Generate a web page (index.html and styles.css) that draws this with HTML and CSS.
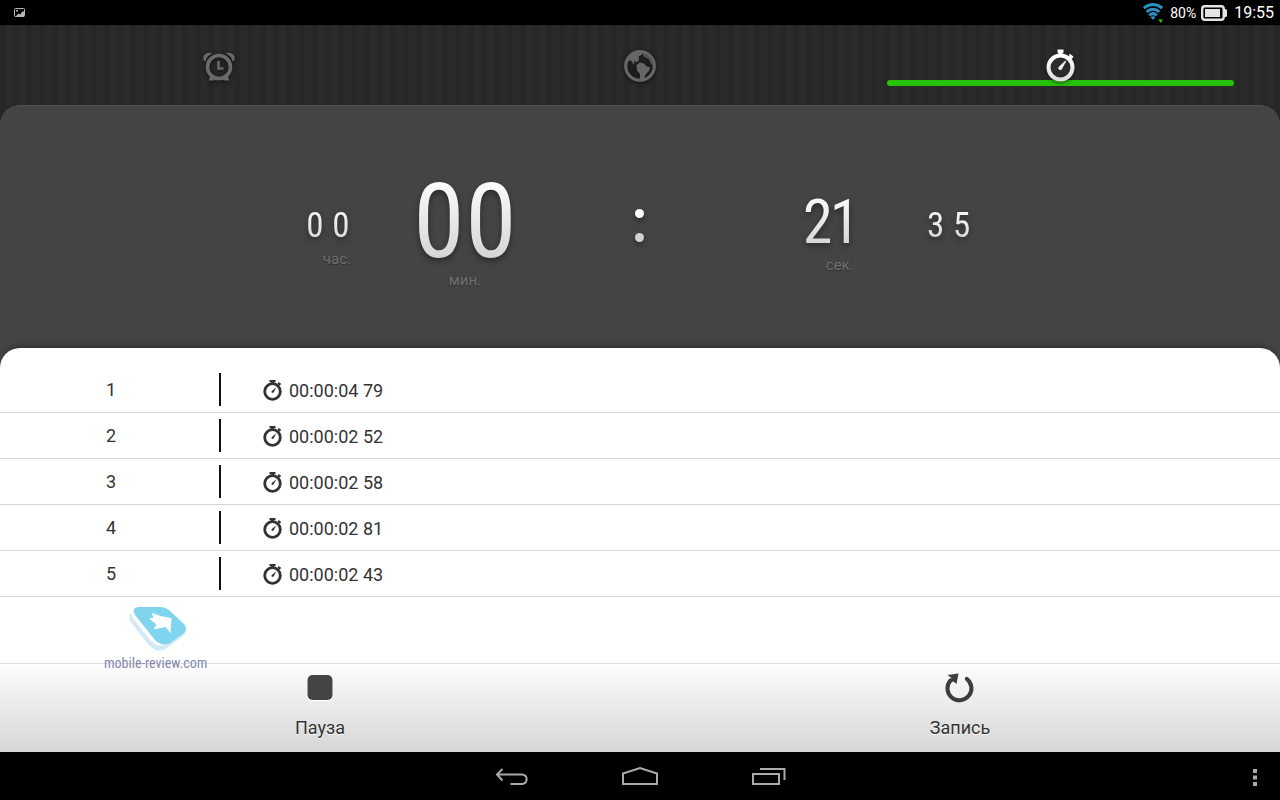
FILE: index.html
```
<!DOCTYPE html>
<html lang="ru">
<head>
  <meta charset="UTF-8">
  <meta name="viewport" content="width=device-width, initial-scale=1">
  <title>Секундомер</title>
  <link rel="stylesheet" href="styles.css">
</head>

<body>
  <!-- Shared icons -->
  <svg class="sprite" aria-hidden="true">
    <defs>
      <linearGradient id="silver" x1="0" y1="0" x2="0" y2="1">
        <stop offset="0" stop-color="#fff"/>
        <stop offset="1" stop-color="#ddd"/>
      </linearGradient>
    </defs>
    <symbol id="lap-watch" viewBox="0 0 20 22">
      <circle cx="9.5" cy="12.5" r="7.8" fill="none" stroke="#333" stroke-width="2.8"/>
      <path d="M6.500 1h6v2.200h-1.600V5H8.100V3.200H6.500z M15.600 3l2.500 1.800-1.200 2-2.500-1.700z" fill="#333"/>
      <path d="M13.300 8.200L10.600 13.500 8.800 14 8.500 12.200z" fill="#333"/>
    </symbol>
  </svg>

  <!-- Status bar -->
  <header class="status-bar">
    <svg width="11" height="9" viewBox="0 0 11 9" aria-hidden="true">
      <rect x="0.500" y="0.500" width="10" height="8" rx="1" fill="none" stroke="#b8b8b8"/>
      <rect x="2" y="2" width="2" height="1.500" fill="#b8b8b8"/>
      <path d="M1 9L4.500 5.500 6 6.500 9 3 10 4V9z" fill="#b8b8b8"/>
    </svg>
    <div class="status-right">
      <svg width="20" height="20" viewBox="0 0 20 20" aria-hidden="true">
        <g fill="none" stroke="#2b93c2" stroke-width="3">
          <path d="M0.800 5Q10-2 19.200 5"/>
          <path d="M3.600 8.800Q10 3.600 16.400 8.800"/>
          <path d="M6.200 12.300Q10 9 13.800 12.300"/>
        </g>
        <path d="M7.400 14Q10 12.400 12.600 14L10 17z" fill="#2b93c2"/>
        <path d="M15.500 16.500h4.500L17.700 20z" fill="#3fc400"/>
      </svg>
      <span class="percent">80%</span>
      <svg width="26" height="16" viewBox="0 0 26 16" aria-hidden="true">
        <rect x="1.200" y="1.200" width="21.500" height="13.600" rx="2.500" fill="none" stroke="#e4e4e4" stroke-width="2.400"/>
        <rect x="4" y="4" width="15" height="8" fill="#e4e4e4"/>
        <path d="M23 4h1.500q1.500 0 1.500 1.500v5q0 1.500-1.500 1.500H23z" fill="#e4e4e4"/>
      </svg>
      <time class="clock">19:55</time>
    </div>
  </header>

  <!-- Tabs -->
  <nav class="tabs">
    <button type="button" aria-label="Будильник">
      <svg width="34" height="34" viewBox="0 0 34 34" aria-hidden="true">
        <circle cx="17" cy="18" r="11.500" fill="none" stroke="#6a6a6a" stroke-width="3.600"/>
        <path d="M1.500 11Q0.500 8 3 5.500 6 2.500 10.500 4.500 4.500 6.500 3.500 12.500zM32.500 11Q33.500 8 31 5.500 28 2.500 23.500 4.500 29.500 6.500 30.500 12.500z" fill="#6a6a6a"/>
        <path d="M9 25.500L6.500 31.500H12L13.500 29zM25 25.500L27.500 31.500H22L20.500 29z" fill="#6a6a6a"/>
        <path d="M16.500 12v7.500h5" fill="none" stroke="#6a6a6a" stroke-width="2.600"/>
      </svg>
    </button>
    <button type="button" aria-label="Мировое время">
      <svg width="34" height="34" viewBox="0 0 34 34" aria-hidden="true">
        <circle cx="17" cy="17" r="14.300" fill="#1c1c1c" stroke="#666" stroke-width="3.200"/>
        <path d="M4 12L8 5 14 2.500 19 3 19 5.500 15.500 7.500 16 11 13.500 13.500 11.500 11.500 11 16 8 11.500z" fill="#666"/>
        <path d="M13.500 16L17 13.500 21 14.500 23.500 17.500 27 18 26 22 22.500 25.500 20.500 31.500 17 32 17 25 14 21.500z" fill="#666"/>
        <path d="M20 4L29 10 31 17 28 15 26 10.500 20 7z" fill="#555"/>
      </svg>
    </button>
    <button type="button" class="active" aria-label="Секундомер" aria-current="page">
      <svg width="34" height="36" viewBox="0 0 34 36" aria-hidden="true">
        <circle cx="16.500" cy="20.500" r="12" fill="#2b2b2b" stroke="url(#silver)" stroke-width="4"/>
        <path d="M13.500 2.500h6v3l-1.500 1.500v2h-3V7l-1.500-1.500z M25.500 6.500l4 3-1.500 2.500-1.500-.5-1.500 2-2-1.500 2-2z" fill="#fff"/>
        <path d="M21.500 13.500l.8.800L18.200 21.500a2 2 0 1 1-2.800-2.300z" fill="#eee"/>
      </svg>
    </button>
  </nav>

  <main class="panel">
    <!-- Running time -->
    <section class="timer">
      <div class="unit small">
        <div class="digits"><span>0</span><span>0</span></div>
        <p class="unit-name">час.</p>
      </div>
      <div class="unit large">
        <div class="digits"><span>0</span><span>0</span></div>
        <p class="unit-name">мин.</p>
      </div>
      <div class="colon"><i></i><i></i></div>
      <div class="unit medium">
        <div class="digits"><span>2</span><span>1</span></div>
        <p class="unit-name">сек.</p>
      </div>
      <div class="unit small">
        <div class="digits"><span>3</span><span>5</span></div>
      </div>
    </section>

    <!-- Laps -->
    <section class="laps">
      <table>
        <tr>
          <th scope="row"><span>1</span></th>
          <td><svg width="20" height="22" aria-hidden="true"><use href="#lap-watch"/></svg>00:00:04 79</td>
        </tr>
        <tr>
          <th scope="row"><span>2</span></th>
          <td><svg width="20" height="22" aria-hidden="true"><use href="#lap-watch"/></svg>00:00:02 52</td>
        </tr>
        <tr>
          <th scope="row"><span>3</span></th>
          <td><svg width="20" height="22" aria-hidden="true"><use href="#lap-watch"/></svg>00:00:02 58</td>
        </tr>
        <tr>
          <th scope="row"><span>4</span></th>
          <td><svg width="20" height="22" aria-hidden="true"><use href="#lap-watch"/></svg>00:00:02 81</td>
        </tr>
        <tr>
          <th scope="row"><span>5</span></th>
          <td><svg width="20" height="22" aria-hidden="true"><use href="#lap-watch"/></svg>00:00:02 43</td>
        </tr>
      </table>

      <div class="watermark">
        <svg width="60" height="50" viewBox="0 0 60 50" aria-hidden="true">
          <path d="M3 9Q0 13 2 17L20 40Q28 49 36 46L54 33Q59 29 58 24L30 38Q24 38 20 33z" fill="#d3e9f7"/>
          <path d="M6 5Q3 10 5 14L22 36Q28 43 36 41L54 29Q59 25 55 22L30 34z" fill="#fff"/>
          <path d="M10 3H33Q37 3 41 6L56 20Q60 25 56 29L42 39Q34 43 27 36L7 11Q3 4 10 3z" fill="#80d5ee"/>
          <path d="M23.500 8.700L32.500 12 43.500 14.300 42.500 29 37.500 23 25.500 25.500 28.500 20.500 21 14.500 25.500 13.700z" fill="#fff"/>
        </svg>
        <span>mobile-review.com</span>
      </div>
    </section>
  </main>

  <!-- Actions -->
  <div class="actions">
    <button type="button">
      <svg width="30" height="32" viewBox="0 0 30 32" aria-hidden="true">
        <rect x="2" y="3" width="26" height="26" rx="5" fill="#fff"/>
        <rect x="2.500" y="3" width="25" height="25" rx="5" fill="#444"/>
      </svg>
      Пауза
    </button>
    <button type="button">
      <svg width="30" height="32" viewBox="0 0 30 32" aria-hidden="true">
        <path d="M21.800 6.800A12 12 0 1 1 5.500 8.300" fill="none" stroke="#3c3c3c" stroke-width="4" stroke-linecap="round"/>
        <path d="M2.500 3L13.500 1.500 11.500 12 8.500 9.500 5 10.500 6.500 6z" fill="#3c3c3c"/>
      </svg>
      Запись
    </button>
  </div>

  <!-- System navigation -->
  <footer class="system-bar">
    <div class="system-keys">
      <button type="button" aria-label="Назад">
        <svg width="36" height="24" viewBox="0 0 36 24" aria-hidden="true">
          <path d="M8.500 3L3 8.500l5.500 6M3 8.500h25.500a4.800 4.800 0 0 1 0 9.500H16.500" fill="none" stroke="#aaa" stroke-width="2"/>
        </svg>
      </button>
      <button type="button" aria-label="Домой">
        <svg width="36" height="24" viewBox="0 0 36 24" aria-hidden="true">
          <path d="M1 18V7.500L18 2 35 7.500V18z" fill="none" stroke="#aaa" stroke-width="2"/>
        </svg>
      </button>
      <button type="button" aria-label="Недавние">
        <svg width="36" height="24" viewBox="0 0 36 24" aria-hidden="true">
          <path d="M3 8h26v10H3zM10 3h24.500v11" fill="none" stroke="#aaa" stroke-width="2"/>
        </svg>
      </button>
    </div>
    <button type="button" class="more" aria-label="Меню">
      <svg width="4" height="18" viewBox="0 0 4 18" aria-hidden="true">
        <path d="M0 0h4v4H0zM0 6.500h4v4H0zM0 13h4v4H0z" fill="#aaa"/>
      </svg>
    </button>
  </footer>
</body>
</html>
```

FILE: styles.css
```
/* Base reset */
* {
  margin: 0;
  padding: 0;
  box-sizing: border-box;
}
body {
  font-family: Roboto, sans-serif;
  font-size: 18px;
  color: #333;
  background: #262626;
  min-height: 100vh;
  display: flex;
  flex-direction: column;
}
button {
  font: inherit;
  color: inherit;
  background: none;
  border: none;
  cursor: pointer;
}
svg {
  display: block;
  flex: none;
}
.sprite {
  position: absolute;
  width: 0;
  height: 0;
}

/* Status bar */
.status-bar {
  height: 25px;
  padding: 0 6px 0 14px;
  display: flex;
  align-items: center;
  justify-content: space-between;
  background: #000;
  color: #fff;
}
.status-right {
  display: flex;
  align-items: center;
  gap: 7px;
}
.percent {
  font-size: 14px;
  margin-right: -2px;
}
.clock {
  font-size: 16px;
}

/* Tabs */
.tabs {
  height: 80px;
  padding: 0 9px;
  display: grid;
  grid-template-columns: repeat(3, 1fr);
  background: repeating-linear-gradient(90deg, #272727 0 6px, #2a2a2a 6px 13px);
}
.tabs button {
  position: relative;
  display: flex;
  justify-content: center;
  padding-top: 24px;
}
.tabs svg {
  position: relative;
  filter: drop-shadow(0 1px 2px rgba(0, 0, 0, 0.6));
}
.tabs .active::before {
  content: "";
  position: absolute;
  left: 37px;
  right: 37px;
  top: 55px;
  height: 6px;
  border-radius: 3px;
  background: #26c103;
}
.tabs .active svg {
  margin-top: -2px;
}

/* Timer */
.panel {
  flex: 1;
  display: flex;
  flex-direction: column;
  background: #444;
  border-top: 1px solid #505050;
  border-radius: 20px 20px 0 0;
}
.timer {
  height: 242px;
  padding: 77px 23% 0 20%;
  display: grid;
  grid-template-columns: 144fr 130fr 218fr 164fr 74fr;
  justify-items: center;
  align-items: start;
}
.unit {
  display: flex;
  flex-direction: column;
  align-items: flex-end;
}
.digits {
  display: flex;
  font-family: "Roboto Condensed", "Liberation Sans Narrow", sans-serif;
  filter: drop-shadow(0 3px 3px rgba(0, 0, 0, 0.4));
}
/* extra padding keeps the clipped gradient from cutting the tops off */
.digits span {
  padding: 8px 0;
  margin: -8px 0;
  text-align: center;
  background: linear-gradient(#fff, #d0d0d0);
  -webkit-background-clip: text;
  background-clip: text;
  color: transparent;
}
.small {
  margin-top: 29px;
}
.small .digits {
  font-size: 35px;
  line-height: 27px;
}
.small span {
  width: 26px;
}
.medium {
  margin-top: 16px;
}
.medium .digits {
  font-size: 61px;
  line-height: 46px;
}
.medium span {
  width: 27px;
}
.large {
  align-items: center;
}
.large .digits {
  font-size: 104px;
  line-height: 77px;
}
.large span {
  width: 52px;
}
.unit-name {
  margin: 10px 3px 0 0;
  font-size: 15px;
  line-height: 20px;
  color: #707070;
  text-shadow: 0 1px 1px #2c2c2c;
}
.large .unit-name {
  margin-right: 0;
}
.colon {
  margin-top: 26px;
  padding-left: 2px;
  display: grid;
  gap: 15px;
  filter: drop-shadow(0 3px 3px rgba(0, 0, 0, 0.4));
}
.colon i {
  width: 9px;
  height: 9px;
  border-radius: 50%;
  background: #fff;
}
.colon i:last-child {
  background: #d2d2d2;
}

/* Laps */
.laps {
  position: relative;
  flex: 1;
  padding-top: 19px;
  background: #fff;
  border-radius: 20px 20px 0 0;
  box-shadow: 0 -5px 6px -4px rgba(0, 0, 0, 0.4);
}
.laps table {
  width: 100%;
  border-spacing: 0;
}
.laps tr {
  height: 46px;
}
.laps th,
.laps td {
  border-bottom: 1px solid #d6d6d6;
}
.laps th {
  width: 221px;
  font-weight: 400;
}
.laps th span {
  display: block;
  padding-left: 3px;
  border-right: 2px solid #111;
  line-height: 33px;
}
.laps td svg {
  display: inline-block;
  vertical-align: -4px;
  margin: 0 6px 0 42px;
}
.watermark {
  position: absolute;
  left: 104px;
  bottom: -9px;
  display: flex;
  flex-direction: column;
  align-items: center;
  font-family: "Roboto Condensed", "Liberation Sans Narrow", sans-serif;
  font-size: 14px;
  line-height: 18px;
  color: #8388ae;
}
.watermark svg {
  margin-left: 4px;
}

/* Actions */
.actions {
  display: grid;
  grid-template-columns: 1fr 1fr;
  border-top: 1px solid #e0e0e0;
  background: linear-gradient(#fdfdfd, #d6d6d6);
}
.actions button {
  height: 88px;
  padding-top: 8px;
  display: flex;
  flex-direction: column;
  align-items: center;
  gap: 12px;
  line-height: 24px;
  text-shadow: 0 1px 0 #fff;
}

/* System navigation */
.system-bar {
  height: 48px;
  padding-top: 4px;
  display: grid;
  grid-template-columns: 1fr auto 1fr;
  align-items: center;
  background: #000;
}
.system-keys {
  grid-column: 2;
  display: flex;
  gap: 92px;
}
.more {
  justify-self: end;
  margin-right: 23px;
}
```
